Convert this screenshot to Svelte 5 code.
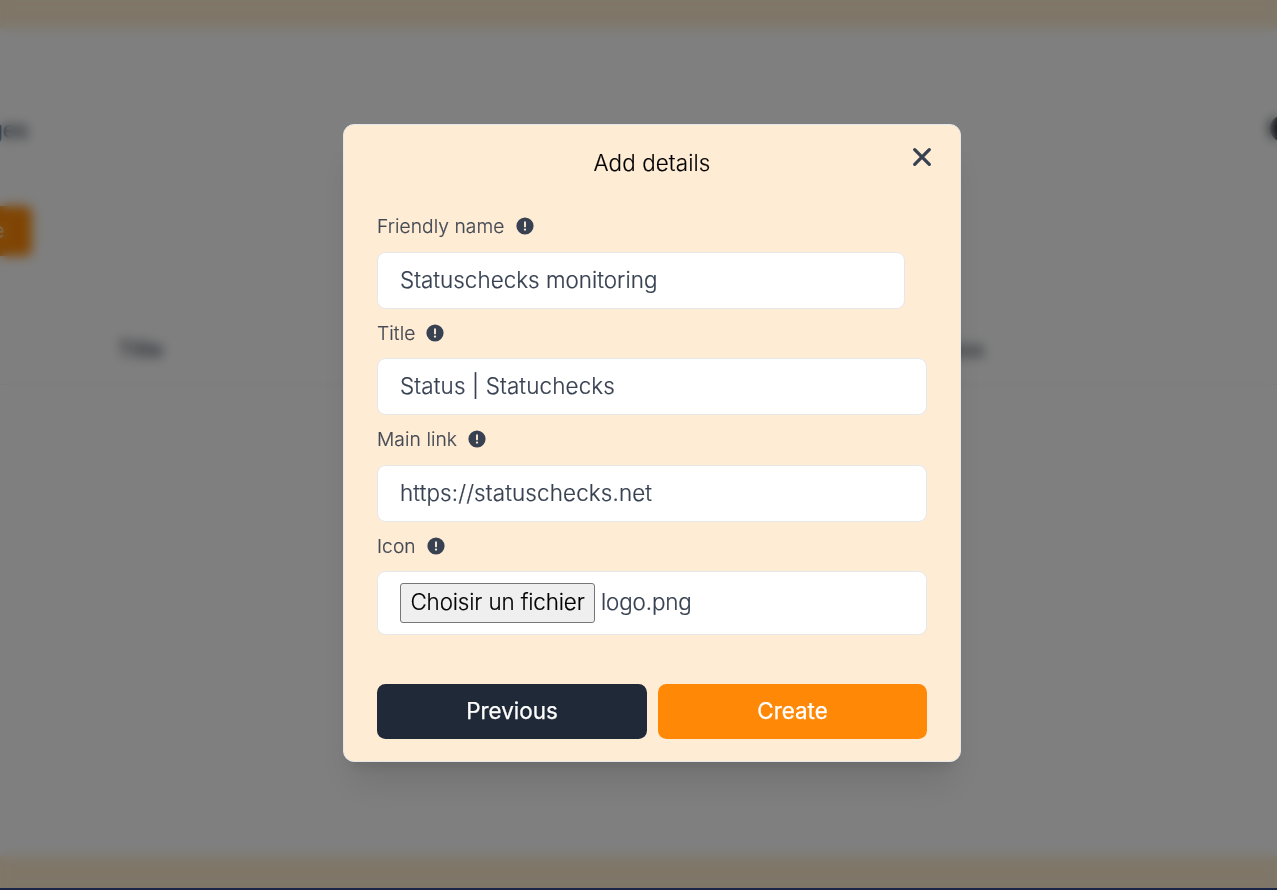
<script>
  const fields = [
    { label: 'Friendly name', value: 'Statuschecks monitoring', spacing: 0.03, short: true },
    { label: 'Title', value: 'Status | Statuchecks', spacing: 0.15 },
    { label: 'Main link', value: 'https://statuschecks.net', spacing: 0.14 },
    { label: 'Icon', file: 'logo.png' }
  ];
</script>

<div class="screen">
  <div class="page">
    <div class="panel">
      <div class="heading"><b>ges</b><i class="avatar"></i></div>
      <div class="toolbar"><div class="new">e</div></div>
      <div class="thead"><span>Title</span><span class="last">Access</span></div>
    </div>
  </div>
  <div class="overlay">
    <div class="modal">
      <header>
        <h1>Add details</h1>
        <button class="close" aria-label="Close">
          <svg width="20" height="20" viewBox="0 0 20 20"><path d="M2.7 2.7 17.3 17.3M17.3 2.7 2.7 17.3" fill="none" stroke="#374151" stroke-width="3.3" stroke-linecap="round" /></svg>
        </button>
      </header>
      {#each fields as f}
        <div class="field">
          <div class="label">
            <span>{f.label}</span>
            <svg width="18" height="18" viewBox="0 0 18 18"><circle cx="9" cy="9" r="8.6" fill="#374151" /><path d="M9 5.3v4.1" stroke="#ffecd5" stroke-width="1.9" stroke-linecap="round" /><circle cx="9" cy="12.6" r="1.15" fill="#ffecd5" /></svg>
          </div>
          {#if f.file}
            <div class="input file"><span class="choose">Choisir un fichier</span><span class="name">{f.file}</span></div>
          {:else}
            <div class="input" class:short={f.short} style="letter-spacing: {f.spacing}px">{f.value}</div>
          {/if}
        </div>
      {/each}
      <footer>
        <button class="prev">Previous</button>
        <button class="create">Create</button>
      </footer>
    </div>
  </div>
  <div class="edge"></div>
</div>

<style>
  :global(body) { overflow: hidden; }
  .screen { position: relative; width: 1277px; height: 890px; overflow: hidden; font-family: Inter, sans-serif; font-weight: 300; color: #374151; background: #ffecd0; box-sizing: border-box; }
  .screen * { box-sizing: border-box; }
  .page { height: 890px; padding: 28px 0 34px; background: #ffedd1; }
  .panel { height: 828px; background: #fff; }
  .heading { height: 178px; padding-top: 87px; display: flex; justify-content: space-between; }
  .heading b { width: 28px; display: flex; justify-content: flex-end; font-size: 22.4px; line-height: 30px; font-weight: 500; }
  .avatar { width: 34px; height: 27px; margin: 0 -27px 0 0; border-radius: 14px; background: #111827; }
  .toolbar { height: 106px; }
  .new { width: 32px; height: 50px; border-radius: 0 7px 7px 0; background: #ff8906; color: #fff; font-size: 22px; line-height: 48px; text-indent: -8px; font-weight: 400; }
  .thead { height: 73px; padding: 22px 293px 0 118px; display: flex; justify-content: space-between; border-bottom: 1px solid #e5e7eb; font-size: 21.5px; line-height: 30px; font-weight: 500; }
  .overlay { position: absolute; inset: 0; padding: 124px 0 0 343px; background: rgba(0, 0, 0, .5); backdrop-filter: blur(5.6px); }
  .modal { width: 618px; height: 638px; padding: 0 33px 0; border: 1px solid #e5e7eb; border-radius: 11px; background: #ffecd5; box-shadow: 0 28px 35px -7px rgba(0, 0, 0, .1), 0 11px 14px -7px rgba(0, 0, 0, .1); }
  header { position: relative; height: 84px; padding-top: 21px; }
  h1 { margin: 0; text-align: center; color: #000; font-size: 22.4px; line-height: 34px; font-weight: 300; letter-spacing: .1px; -webkit-text-stroke: .15px currentColor; }
  button { font: inherit; border: 0; padding: 0; }
  .close { position: absolute; right: -5px; top: 22px; width: 20px; height: 20px; background: none; }
  .close svg { display: block; }
  .field { height: 106.4px; }
  .label { height: 43px; padding-top: 3.4px; display: flex; align-items: flex-start; gap: 11px; font-size: 19.2px; line-height: 28px; letter-spacing: .08px; color: #444a55; -webkit-text-stroke: .2px currentColor; }
  .label svg { margin-top: 5px; -webkit-text-stroke: 0; }
  .input { height: 57px; padding: 0 22px; border: 1px solid #e5e7eb; border-radius: 8.5px; background: #fff; font-size: 22.4px; line-height: 54px; white-space: pre; -webkit-text-stroke: .2px currentColor; }
  .short { width: 528px; }
  .file { height: 64px; display: flex; align-items: center; gap: 6px; line-height: 36px; letter-spacing: -.14px; }
  .choose { width: 195px; height: 40px; border: 1px solid #767676; border-radius: 3px; background: #efefef; color: #000; text-align: center; }
  .name { margin-top: -3px; }
  footer { display: grid; grid-template-columns: 270px 269px; gap: 11px; margin-top: 49.4px; }
  footer button { height: 55px; border-radius: 8.5px; font-size: 22.4px; line-height: 54px; font-weight: 400; color: #fff; -webkit-text-stroke: .25px currentColor; }
  .prev { background: #1f2937; }
  .create { background: #ff8906; }
  .edge { position: absolute; left: 0; right: 0; bottom: 0; height: 2px; background: #1b2547; }
</style>
